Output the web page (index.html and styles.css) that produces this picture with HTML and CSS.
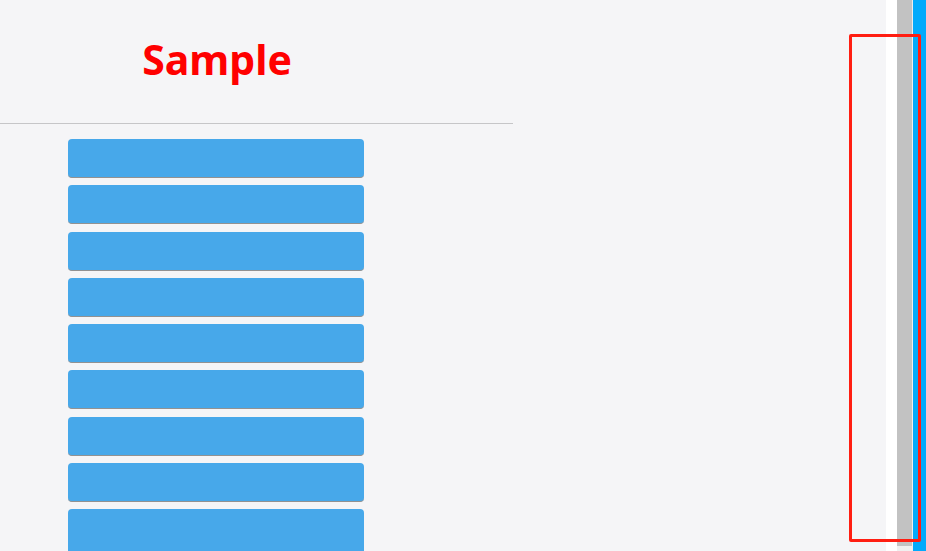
FILE: index.html
```html
<!DOCTYPE html>
<html lang="en">
<head>
    <meta charset="UTF-8">
    <meta name="viewport" content="width=device-width, initial-scale=1.0">
    <title>Sample</title>
    <link rel="stylesheet" href="styles.css">
</head>
<body>
    <div class="screen">
        <div class="main">
            <div class="panel">
                <div class="header">
                    <h1 class="title">Sample</h1>
                </div>
                <div class="button-list">
                    <div class="item-button"></div>
                    <div class="item-button"></div>
                    <div class="item-button"></div>
                    <div class="item-button"></div>
                    <div class="item-button"></div>
                    <div class="item-button"></div>
                    <div class="item-button"></div>
                    <div class="item-button"></div>
                    <div class="item-button tall"></div>
                </div>
            </div>
        </div>
        <div class="side-strip"></div>
        <div class="scroll-track">
            <div class="scroll-thumb"></div>
        </div>
        <div class="scroll-gap"></div>
        <div class="edge"></div>
    </div>
    <!-- selection frame over the scroll area -->
    <div class="highlight"></div>
</body>
</html>
```

FILE: styles.css
```css
html, body {
    margin: 0;
    padding: 0;
    height: 100%;
    overflow: hidden;
}
body {
    font-family: "Noto Sans", "DejaVu Sans", sans-serif;
    background-color: #f5f5f7;
}
.screen {
    display: flex;
    height: 551px;
}
.main {
    flex: 1;
    background-color: #f5f5f7;
    overflow: hidden;
}
.panel {
    width: 513px;
}
.header {
    height: 124px;
    box-sizing: border-box;
    border-bottom: 1px solid #c6c6c8;
    padding-top: 31px;
}
.title {
    width: 434px;
    margin: 0;
    text-align: center;
    color: #ff0000;
    font-size: 41px;
    font-weight: bold;
    line-height: 56px;
}
.button-list {
    display: flex;
    flex-direction: column;
    gap: 7.25px;
    padding-top: 15px;
    padding-left: 68px;
}
.item-button {
    width: 296px;
    height: 38px;
    flex-shrink: 0;
    background-color: #47a8ea;
    border-radius: 4px;
    border-bottom: 1px solid #929292;
}
.item-button.tall {
    height: 60px;
}
.side-strip {
    width: 11px;
    background-color: #ffffff;
}
.scroll-track {
    width: 15px;
    background-color: #f0f0f0;
}
.scroll-thumb {
    height: 546px;
    background-color: #c2c2c2;
}
.scroll-gap {
    width: 1px;
    background-color: #eeeeee;
}
.edge {
    width: 13px;
    background-color: #03aafb;
}
.highlight {
    position: absolute;
    left: 849px;
    top: 34px;
    width: 66px;
    height: 502px;
    border: 3px solid #ff1e12;
    border-radius: 2px;
}
```
